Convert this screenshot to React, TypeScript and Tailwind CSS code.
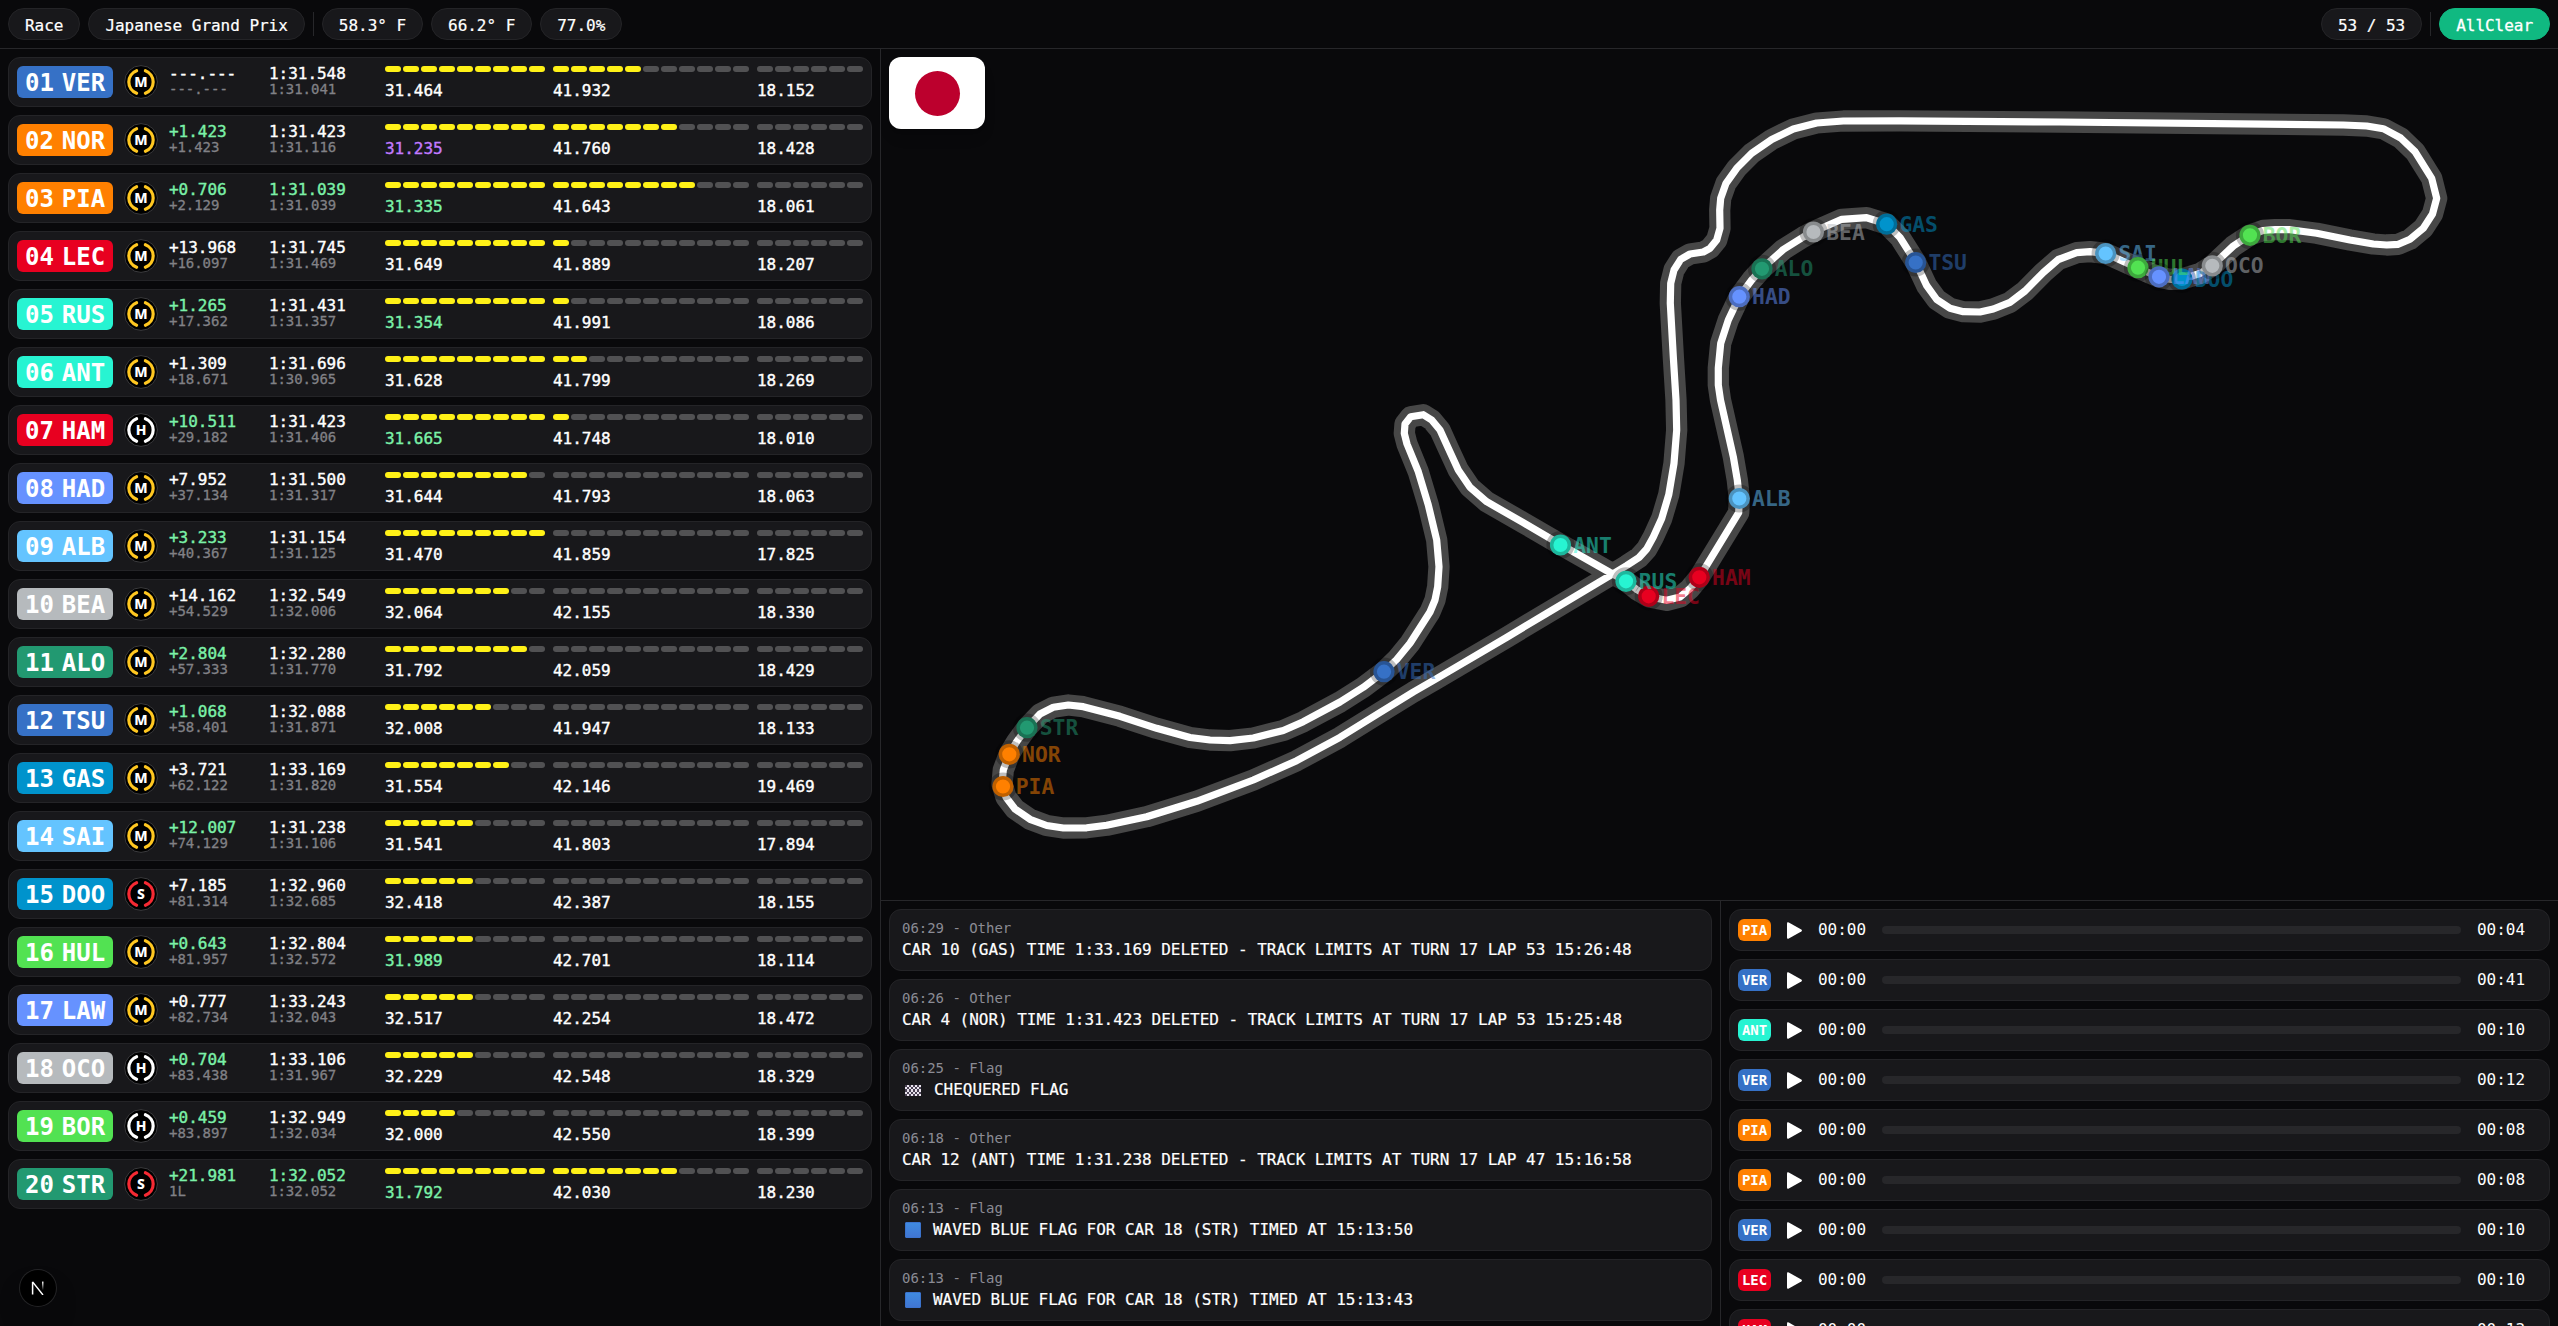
import React from "react";

type Tone = "w" | "g" | "p";
type Driver = {
  code: string;
  tyre: "M" | "H" | "S";
  gap: string;
  gapTone: Tone;
  leader: string;
  lap: string;
  lapTone: Tone;
  best: string;
  sectors: [string, string, string];
  s1Tone: Tone;
  done: [number, number];
};

const TEAM: Record<string, string> = {
  VER: "#3671C6", TSU: "#3671C6",
  NOR: "#FF8000", PIA: "#FF8000",
  LEC: "#E80020", HAM: "#E80020",
  RUS: "#27F4D2", ANT: "#27F4D2",
  HAD: "#6692FF", LAW: "#6692FF",
  ALB: "#64C4FF", SAI: "#64C4FF",
  BEA: "#B6BABD", OCO: "#B6BABD",
  ALO: "#229971", STR: "#229971",
  GAS: "#0093CC", DOO: "#0093CC",
  HUL: "#52E252", BOR: "#52E252",
};

const d = (
  code: string, tyre: Driver["tyre"], gap: string, gapTone: Tone, leader: string,
  lap: string, lapTone: Tone, best: string,
  s1: string, s1Tone: Tone, s2: string, s3: string, a: number, b: number,
): Driver => ({ code, tyre, gap, gapTone, leader, lap, lapTone, best, sectors: [s1, s2, s3], s1Tone, done: [a, b] });

const DRIVERS: Driver[] = [
  d("VER", "M", "---.---", "w", "---.---", "1:31.548", "w", "1:31.041", "31.464", "w", "41.932", "18.152", 9, 5),
  d("NOR", "M", "+1.423", "g", "+1.423", "1:31.423", "w", "1:31.116", "31.235", "p", "41.760", "18.428", 9, 7),
  d("PIA", "M", "+0.706", "g", "+2.129", "1:31.039", "g", "1:31.039", "31.335", "g", "41.643", "18.061", 9, 8),
  d("LEC", "M", "+13.968", "w", "+16.097", "1:31.745", "w", "1:31.469", "31.649", "w", "41.889", "18.207", 9, 1),
  d("RUS", "M", "+1.265", "g", "+17.362", "1:31.431", "w", "1:31.357", "31.354", "g", "41.991", "18.086", 9, 1),
  d("ANT", "M", "+1.309", "w", "+18.671", "1:31.696", "w", "1:30.965", "31.628", "w", "41.799", "18.269", 9, 2),
  d("HAM", "H", "+10.511", "g", "+29.182", "1:31.423", "w", "1:31.406", "31.665", "g", "41.748", "18.010", 9, 1),
  d("HAD", "M", "+7.952", "w", "+37.134", "1:31.500", "w", "1:31.317", "31.644", "w", "41.793", "18.063", 8, 0),
  d("ALB", "M", "+3.233", "g", "+40.367", "1:31.154", "w", "1:31.125", "31.470", "w", "41.859", "17.825", 9, 0),
  d("BEA", "M", "+14.162", "w", "+54.529", "1:32.549", "w", "1:32.006", "32.064", "w", "42.155", "18.330", 7, 0),
  d("ALO", "M", "+2.804", "g", "+57.333", "1:32.280", "w", "1:31.770", "31.792", "w", "42.059", "18.429", 8, 0),
  d("TSU", "M", "+1.068", "g", "+58.401", "1:32.088", "w", "1:31.871", "32.008", "w", "41.947", "18.133", 6, 0),
  d("GAS", "M", "+3.721", "w", "+62.122", "1:33.169", "w", "1:31.820", "31.554", "w", "42.146", "19.469", 7, 0),
  d("SAI", "M", "+12.007", "g", "+74.129", "1:31.238", "w", "1:31.106", "31.541", "w", "41.803", "17.894", 5, 0),
  d("DOO", "S", "+7.185", "w", "+81.314", "1:32.960", "w", "1:32.685", "32.418", "w", "42.387", "18.155", 5, 0),
  d("HUL", "M", "+0.643", "g", "+81.957", "1:32.804", "w", "1:32.572", "31.989", "g", "42.701", "18.114", 5, 0),
  d("LAW", "M", "+0.777", "w", "+82.734", "1:33.243", "w", "1:32.043", "32.517", "w", "42.254", "18.472", 5, 0),
  d("OCO", "H", "+0.704", "g", "+83.438", "1:33.106", "w", "1:31.967", "32.229", "w", "42.548", "18.329", 5, 0),
  d("BOR", "H", "+0.459", "g", "+83.897", "1:32.949", "w", "1:32.034", "32.000", "w", "42.550", "18.399", 4, 0),
  d("STR", "S", "+21.981", "g", "1L", "1:32.052", "g", "1:32.052", "31.792", "g", "42.030", "18.230", 9, 7),
];

const toneClass: Record<Tone, string> = {
  w: "text-white",
  g: "text-[#7bf1a8]",
  p: "text-[#c27aff]",
};

const TYRE: Record<Driver["tyre"], string> = { M: "#FFC720", H: "#FFFFFF", S: "#F62A33" };

function Tyre({ kind }: { kind: Driver["tyre"] }) {
  return (
    <svg viewBox="0 0 34 34" className="mx-[3px] h-[34px] w-[34px]">
      <circle cx="17" cy="17" r="16.4" fill="#000" stroke="#3b3b3e" strokeWidth="1" />
      <path d="M12.6 5.7a12.1 12.1 0 0 0 0 22.6M21.4 5.7a12.1 12.1 0 0 1 0 22.6" fill="none" stroke={TYRE[kind]} strokeWidth="3.2" strokeLinecap="round" />
      <text x="17" y="22" textAnchor="middle" fontFamily="'Noto Sans'" fontWeight="800" fontSize="14" fill="#fff">{kind}</text>
    </svg>
  );
}

function Sector({ time, total, done, tone }: { time: string; total: number; done: number; tone: Tone }) {
  return (
    <div className="flex h-8 flex-col gap-[11px]">
      <div className="flex gap-0.5">
        {Array.from({ length: total }, (_, i) => (
          <div key={i} className={i < done ? "h-1.5 w-4 rounded-full bg-[#fff117]" : "h-1.5 w-4 rounded-full bg-[#515153]"} />
        ))}
      </div>
      <p className={`text-base leading-4 [-webkit-text-stroke:0.4px_currentColor] ${toneClass[tone]}`}>{time}</p>
    </div>
  );
}

function Row({ driver, pos }: { driver: Driver; pos: number }) {
  return (
    <div className="flex h-[50px] items-center gap-2 rounded-xl border border-[#242427] bg-[#18181b] px-2">
      <div className="flex h-8 w-24 items-center gap-2 rounded-md px-2 pt-0.5 text-2xl leading-7 font-bold" style={{ background: TEAM[driver.code] }}>
        <span>{String(pos).padStart(2, "0")}</span>
        <span>{driver.code}</span>
      </div>
      <Tyre kind={driver.tyre} />
      <div className="w-[92px] pb-0.5">
        <p className={`text-base leading-4 [-webkit-text-stroke:0.4px_currentColor] ${toneClass[driver.gapTone]}`}>{driver.gap}</p>
        <p className="text-sm leading-[14px] text-[#818186] [-webkit-text-stroke:0.3px_currentColor]">{driver.leader}</p>
      </div>
      <div className="w-[108px] pb-0.5">
        <p className={`text-base leading-4 [-webkit-text-stroke:0.4px_currentColor] ${toneClass[driver.lapTone]}`}>{driver.lap}</p>
        <p className="text-sm leading-[14px] text-[#818186] [-webkit-text-stroke:0.3px_currentColor]">{driver.best}</p>
      </div>
      <Sector time={driver.sectors[0]} total={9} done={driver.done[0]} tone={driver.s1Tone} />
      <Sector time={driver.sectors[1]} total={11} done={driver.done[1]} tone="w" />
      <Sector time={driver.sectors[2]} total={6} done={0} tone="w" />
    </div>
  );
}

const TRACK: [number, number][] = [
  [1843.3, 121], [1816.7, 123], [1793.3, 129], [1771.7, 139.5], [1751.7, 153.3], [1736.7, 168.3], [1726, 183.3], [1720.7, 198.3],
  [1719.7, 210], [1720, 228.3], [1716.7, 240], [1710, 248.3], [1703.3, 252], [1690, 254], [1680.7, 259.3], [1674, 270],
  [1670.7, 283.3], [1670.3, 303.3], [1673.3, 356.7], [1676, 400], [1676.7, 430], [1674, 463.3], [1668.8, 494.5], [1661.7, 518.5],
  [1653.3, 537], [1646.7, 549], [1639, 557.5], [1626.7, 565.5], [1611, 575], [1546.7, 613.3], [1506.7, 637.3], [1435, 679.5],
  [1413.3, 692], [1380, 712.5], [1340, 737.3], [1296.7, 760.7], [1253.3, 780], [1196.7, 801.3], [1146.7, 816.7], [1106.7, 825.3],
  [1086.7, 827.8], [1063.3, 828], [1046.7, 825.5], [1030, 819.3], [1015, 809], [1006, 797.3], [1002, 784], [1003.3, 770],
  [1009.3, 754], [1016.7, 741.7], [1027, 727.7], [1040, 714], [1053.3, 707.3], [1068.3, 705], [1083.3, 706.7], [1120, 716.3],
  [1156.7, 728.3], [1190, 737.5], [1210, 740], [1230, 740.7], [1253.3, 738], [1283.3, 730.5], [1303.3, 721.7], [1340, 702],
  [1363.3, 687.3], [1384, 671.7], [1396.7, 659.5], [1410, 643.3], [1430, 612], [1435, 600], [1437.7, 586.7], [1439, 566.7],
  [1436.7, 540], [1428.3, 505], [1418.3, 471.7], [1407, 444], [1404.3, 433.3], [1405, 424], [1410.7, 416.7], [1423.3, 414.7],
  [1431.7, 420], [1440, 430], [1448.3, 448.3], [1458.3, 470], [1470, 487.3], [1486.7, 501.7], [1523.3, 522.7], [1560.3, 544.3],
  [1610, 572.5], [1626, 581], [1636.7, 589.5], [1648.7, 596.7], [1666.7, 600.3], [1680, 597], [1690, 588.6], [1699.3, 577.3],
  [1738.7, 512.7], [1739.3, 498.3], [1737.3, 480], [1733.3, 456.7], [1720.5, 400], [1718.3, 385], [1718.3, 368], [1720.7, 343.3], [1728.3, 320],
  [1739.3, 296.7], [1751.7, 280], [1762, 268.7], [1783.3, 249.5], [1803.3, 237], [1813.3, 231.7], [1841.7, 219.3], [1866.7, 217.7],
  [1886.7, 224], [1900, 237.5], [1915.7, 262.3], [1926.7, 285.7], [1936.7, 299.5], [1950, 308.3], [1963.3, 311.7], [1980, 312],
  [1993.3, 309], [2010, 302.3], [2025, 291], [2043.3, 272.5], [2058.3, 259.5], [2076.7, 252.7], [2090, 251.7], [2105.7, 253.3],
  [2121.7, 260.7], [2138, 268], [2159, 277], [2170, 279.3], [2182, 279], [2200, 273.5], [2212.3, 265.7], [2233.3, 246],
  [2250, 235], [2263, 230.5], [2275, 229.7], [2290, 229.7], [2316.7, 233.3], [2350, 240], [2373.3, 244], [2386.7, 245],
  [2398.3, 244.3], [2410, 239.3], [2423.3, 228.3], [2432.5, 214], [2436.7, 198.3], [2431.7, 178.3], [2415, 151.7], [2400.7, 138],
  [2383.3, 128.7], [2366.7, 126], [2343.3, 125], [2060, 122], [1900, 120.8],
];
const trackPath = "M" + TRACK.map((p) => p.join(" ")).join("L") + "Z";

const CARS: [string, number, number][] = [
  ["VER", 1384, 671.7], ["NOR", 1009.3, 754.3], ["PIA", 1003, 786.5], ["LEC", 1648.7, 596.3], ["RUS", 1626, 581.3],
  ["ANT", 1560.5, 545], ["HAM", 1699.3, 577.3], ["HAD", 1739.3, 296.7], ["ALB", 1739.3, 498.5], ["BEA", 1813.5, 232],
  ["ALO", 1762, 268.8], ["TSU", 1915.7, 262.5], ["GAS", 1886.7, 224.2], ["SAI", 2105.7, 253.5], ["DOO", 2182, 279],
  ["HUL", 2138, 267.7], ["LAW", 2159, 276.8], ["OCO", 2212.3, 265.8], ["BOR", 2250, 235.3], ["STR", 1027, 727.7],
];

function TrackMap() {
  return (
    <div className="relative h-[851px]">
      <svg viewBox="881 49 1677 851" className="block h-full w-full">
        <path d={trackPath} fill="none" stroke="#474747" strokeWidth="21.3" strokeLinejoin="round" />
        <path d={trackPath} fill="none" stroke="#fff" strokeWidth="7.2" strokeLinejoin="round" />
        {CARS.map(([code, x, y]) => (
          <g key={code}>
            <circle cx={x} cy={y} r="10.6" fill={TEAM[code]} stroke="#000" strokeOpacity="0.25" strokeWidth="7" />
            <text x={x + 12.8} y={y + 7.6} fill={TEAM[code]} fillOpacity="0.5" fontSize="21.3" fontWeight="700">{code}</text>
          </g>
        ))}
      </svg>
      <div className="absolute top-2 left-2 flex h-[72px] w-24 items-center justify-center rounded-xl bg-white shadow-lg">
        <div className="h-[45px] w-[45px] rounded-full bg-[#bc002d]" />
      </div>
    </div>
  );
}

const Chequered = () => (
  <svg viewBox="0 0 16 11" className="mr-[13px] ml-[3px] h-[11px] w-4" shapeRendering="crispEdges">
    <rect width="16" height="11" rx="1" fill="#e9e4ee" />
    {Array.from({ length: 40 }, (_, i) => {
      const r = Math.floor(i / 8);
      const c = i % 8;
      return (r + c) % 2 === 0 ? <rect key={i} x={c * 2} y={r * 2.2} width="2" height="2.2" fill="#4b4355" /> : null;
    })}
  </svg>
);

const BlueFlag = () => (
  <div className="mr-3 ml-[3px] h-4 w-4 rounded-[1px] border border-[#3b73cd] bg-linear-to-b from-[#3f8ae0] to-[#4076d3]" />
);

const MESSAGES: { t: string; kind: string; flag?: "cheq" | "blue"; text: string }[] = [
  { t: "06:29", kind: "Other", text: "CAR 10 (GAS) TIME 1:33.169 DELETED - TRACK LIMITS AT TURN 17 LAP 53 15:26:48" },
  { t: "06:26", kind: "Other", text: "CAR 4 (NOR) TIME 1:31.423 DELETED - TRACK LIMITS AT TURN 17 LAP 53 15:25:48" },
  { t: "06:25", kind: "Flag", flag: "cheq", text: "CHEQUERED FLAG" },
  { t: "06:18", kind: "Other", text: "CAR 12 (ANT) TIME 1:31.238 DELETED - TRACK LIMITS AT TURN 17 LAP 47 15:16:58" },
  { t: "06:13", kind: "Flag", flag: "blue", text: "WAVED BLUE FLAG FOR CAR 18 (STR) TIMED AT 15:13:50" },
  { t: "06:13", kind: "Flag", flag: "blue", text: "WAVED BLUE FLAG FOR CAR 18 (STR) TIMED AT 15:13:43" },
];

const RADIOS: [string, string][] = [
  ["PIA", "00:04"], ["VER", "00:41"], ["ANT", "00:10"], ["VER", "00:12"], ["PIA", "00:08"],
  ["PIA", "00:08"], ["VER", "00:10"], ["LEC", "00:10"], ["HAM", "00:13"],
];

const Chip = ({ children }: { children: React.ReactNode }) => (
  <div className="flex h-8 items-center rounded-full border border-[#242427] bg-[#18181b] px-4 pt-[3px] [-webkit-text-stroke:0.2px_currentColor]">{children}</div>
);
const Divider = () => <div className="h-6 w-px bg-[#27272a]" />;

export default function App() {
  return (
    <div className="flex h-[1326px] w-[2558px] flex-col overflow-hidden bg-[#09090b] font-['DejaVu_Sans_Mono',monospace] text-base tracking-[-0.002em] text-white">
      <header className="flex h-[49px] shrink-0 items-center justify-between border-b border-[#27272a] px-2">
        <div className="flex items-center gap-2">
          <Chip>Race</Chip>
          <Chip>Japanese Grand Prix</Chip>
          <Divider />
          <Chip>58.3° F</Chip>
          <Chip>66.2° F</Chip>
          <Chip>77.0%</Chip>
        </div>
        <div className="flex items-center gap-2">
          <Chip>53 / 53</Chip>
          <Divider />
          <div className="flex h-8 items-center rounded-full border border-[#10b981] bg-[#10b981] px-4 pt-[3px] [-webkit-text-stroke:0.3px_currentColor]">AllClear</div>
        </div>
      </header>

      <div className="flex min-h-0 flex-1">
        <aside className="relative w-[881px] shrink-0 border-r border-[#27272a] p-2">
          <div className="flex flex-col gap-2">
            {DRIVERS.map((driver, i) => (
              <Row key={driver.code} driver={driver} pos={i + 1} />
            ))}
          </div>
          <div className="absolute bottom-5 left-5 flex h-9 w-9 items-center justify-center rounded-full bg-black shadow-[0_0_0_1px_#242426,0_16px_32px_-8px_rgba(0,0,0,0.3)]">
            <svg viewBox="0 0 14 14" className="h-3.5 w-3.5" fill="none">
              <defs>
                <linearGradient id="stem" x1="0" y1="0" x2="0" y2="1">
                  <stop stopColor="#fff" />
                  <stop offset="1" stopColor="#fff" stopOpacity="0" />
                </linearGradient>
              </defs>
              <path d="M1.6 13.4V.9L12 13.9" stroke="#fff" strokeWidth="1.5" strokeLinejoin="bevel" />
              <rect x="11" y=".6" width="1.5" height="8.6" fill="url(#stem)" />
            </svg>
          </div>
        </aside>

        <main className="flex min-w-0 flex-1 flex-col">
          <TrackMap />
          <div className="flex min-h-0 flex-1 border-t border-[#27272a]">
            <section className="flex w-[840px] shrink-0 flex-col gap-2 overflow-hidden border-r border-[#27272a] p-2">
              {MESSAGES.map((m, i) => (
                <div key={i} className="h-[62px] shrink-0 rounded-xl border border-[#242427] bg-[#18181b] px-3 py-2">
                  <p className="text-sm text-[#8b8b94]">{m.t} - {m.kind}</p>
                  <div className="flex h-6 items-center [-webkit-text-stroke:0.2px_currentColor]">
                    {m.flag === "cheq" && <Chequered />}
                    {m.flag === "blue" && <BlueFlag />}
                    <p>{m.text}</p>
                  </div>
                </div>
              ))}
            </section>
            <section className="flex min-w-0 flex-1 flex-col gap-2 overflow-hidden p-2">
              {RADIOS.map(([code, len], i) => (
                <div key={i} className="flex h-[42px] shrink-0 items-center rounded-xl border border-[#242427] bg-[#18181b] px-2">
                  <div className="h-[22px] w-[33px] rounded-md text-center text-sm leading-[22px] font-bold" style={{ background: TEAM[code] }}>{code}</div>
                  <svg viewBox="0 0 15 17" className="ml-4 h-[17px] w-[15px]" fill="#fff">
                    <path d="M0 1.6Q0-.3 1.8.6L14.3 7.6Q15.6 8.5 14.3 9.4L1.8 16.4Q0 17.3 0 15.4Z" />
                  </svg>
                  <span className="ml-4 w-12">00:00</span>
                  <div className="mr-4 ml-4 h-2 flex-1 rounded-full bg-[#27272a]" />
                  <span className="mr-4 w-12">{len}</span>
                </div>
              ))}
            </section>
          </div>
        </main>
      </div>
    </div>
  );
}
